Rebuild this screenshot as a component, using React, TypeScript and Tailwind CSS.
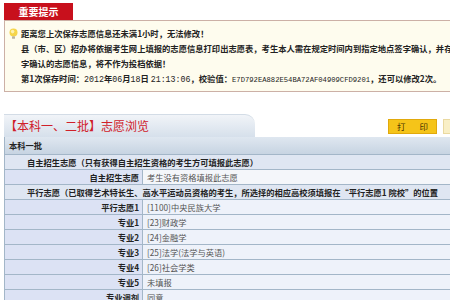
import React from "react";

const cjk = { fontFamily: '"Noto Sans CJK SC", "Noto Sans", sans-serif' };

const rows = [
  { label: "平行志愿1", value: "[1100]中央民族大学" },
  { label: "专业1", value: "[23]财政学" },
  { label: "专业2", value: "[24]金融学" },
  { label: "专业3", value: "[25]法学(法学与英语)" },
  { label: "专业4", value: "[26]社会学类" },
  { label: "专业5", value: "未填报" },
  { label: "专业调剂", value: "同意" },
];

function Bulb() {
  return (
    <svg width="9" height="12" viewBox="0 0 9 12" className="shrink-0">
      <circle cx="4.5" cy="4.5" r="4" fill="#f6d54a" />
      <circle cx="3.6" cy="3.6" r="1.8" fill="#fdf1b0" />
      <rect x="3" y="8.2" width="3" height="2.6" rx="0.6" fill="#b9b2a0" />
    </svg>
  );
}

function PairRow({ label, value, light }: { label: string; value: string; light?: boolean }) {
  return (
    <div className="grid grid-cols-[138px_1fr] h-[15px] border-b border-[#a3b6c8]">
      <div className="bg-[#dce2f4] border-r border-[#a3b6c8] text-right pr-[3px] font-bold text-[#222] leading-[14px]">
        {label}
      </div>
      <div className={`${light ? "bg-[#f4f6fa]" : "bg-[#eef2fa]"} pl-[4px] text-[#555] leading-[14px]`}>
        {value}
      </div>
    </div>
  );
}

export default function App() {
  return (
    <div className="w-[450px] h-[300px] overflow-hidden bg-white" style={cjk}>
      <div className="w-[520px] pl-[4px] pt-[3px]">
        {/* 重要提示 */}
        <div className="w-[69px] h-[17px] bg-[#c8101c] text-white font-bold text-[10px] leading-[17px] text-center">
          重要提示
        </div>
        <div className="border border-[#ccb0a6] bg-[#fefcee] pl-[16px] pt-[5px] pb-[3px] text-[8.3px] leading-[15px] text-[#222] whitespace-nowrap">
          <div className="flex items-center">
            <span className="-ml-[12px] mr-[3px] flex">
              <Bulb />
            </span>
            <span className="font-bold">距离您上次保存志愿信息还未满1小时，无法修改！</span>
          </div>
          <div className="font-bold">
            县（市、区）招办将依据考生网上填报的志愿信息打印出志愿表，考生本人需在规定时间内到指定地点签字确认，并存档，未签
          </div>
          <div className="font-bold">字确认的志愿信息，将不作为投档依据！</div>
          <div className="font-bold">
            第1次保存时间：<span className="font-normal" style={{ fontFamily: '"Liberation Mono", monospace' }}>2012</span>年
            <span className="font-normal" style={{ fontFamily: '"Liberation Mono", monospace' }}>06</span>月
            <span className="font-normal" style={{ fontFamily: '"Liberation Mono", monospace' }}>18</span>日{" "}
            <span className="font-normal" style={{ fontFamily: '"Liberation Mono", monospace' }}>21:13:06</span>，校验值：
            <span className="font-normal text-[7.2px]" style={{ fontFamily: '"Liberation Mono", monospace' }}>
              E7D792EA882E54BA72AF04909CFD9201
            </span>
            ，还可以修改2次。
          </div>
        </div>

        {/* 标题 */}
        <div className="mt-[22px] flex items-end h-[23px]">
          <div className="w-[251px] h-[23px] rounded-tr-[10px] bg-gradient-to-b from-[#f1f4f8] to-[#d6e0eb] border-t border-[#d3dce6] pl-[1px] text-[12px] leading-[22px] text-[#d0202a]">
            【本科一、二批】志愿浏览
          </div>
          <div className="ml-[133px] mb-[3px] w-[49px] h-[15px] bg-[#f5c419] border border-[#e1a90c] text-[8.5px] leading-[13px] text-[#4a3300] flex justify-center gap-[14px]">
            <span>打</span>
            <span>印</span>
          </div>
          <div className="ml-[6px] mb-[3px] w-[40px] h-[15px] bg-[#f9efc6] border border-[#ead9a0]" />
        </div>

        {/* 表格 */}
        <div className="border-l border-[#a3b6c8] text-[8.25px]">
          <div className="h-[18px] border-b border-[#a3b6c8] bg-gradient-to-b from-[#dfe7f0] to-[#c7d4e2] pl-[4px] font-bold text-[#222] leading-[17px]">
            本科一批
          </div>
          <div className="h-[15px] border-b border-[#a3b6c8] bg-[#dfe6f2] pl-[22px] font-bold text-[#222] leading-[14px] whitespace-nowrap">
            自主招生志愿（只有获得自主招生资格的考生方可填报此志愿）
          </div>
          <PairRow label="自主招生志愿" value="考生没有资格填报此志愿" light />
          <div className="h-[15px] border-b border-[#a3b6c8] bg-[#dfe6f2] pl-[22px] font-bold text-[#222] leading-[14px] whitespace-nowrap">
            平行志愿（已取得艺术特长生、高水平运动员资格的考生，所选择的相应高校须填报在“平行志愿1 院校”的位置
          </div>
          {rows.map((r) => (
            <PairRow key={r.label} label={r.label} value={r.value} />
          ))}
        </div>
      </div>
    </div>
  );
}
